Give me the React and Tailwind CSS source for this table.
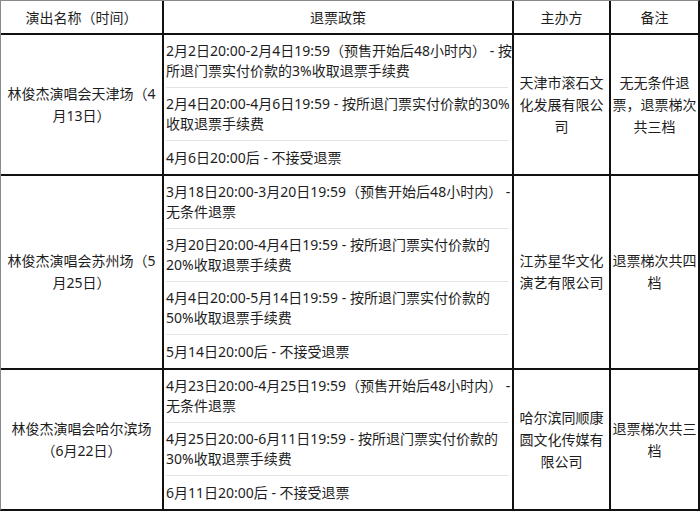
const rows = [
  {
    name: ["林俊杰演唱会天津场（4", "月13日）"],
    policies: [
      ["2月2日20:00-2月4日19:59（预售开始后48小时内） - 按", "所退门票实付价款的3%收取退票手续费"],
      ["2月4日20:00-4月6日19:59 - 按所退门票实付价款的30%", "收取退票手续费"],
      ["4月6日20:00后 - 不接受退票"],
    ],
    host: ["天津市滚石文", "化发展有限公", "司"],
    note: ["无无条件退", "票，退票梯次", "共三档"],
  },
  {
    name: ["林俊杰演唱会苏州场（5", "月25日）"],
    policies: [
      ["3月18日20:00-3月20日19:59（预售开始后48小时内） -", "无条件退票"],
      ["3月20日20:00-4月4日19:59 - 按所退门票实付价款的", "20%收取退票手续费"],
      ["4月4日20:00-5月14日19:59 - 按所退门票实付价款的", "50%收取退票手续费"],
      ["5月14日20:00后 - 不接受退票"],
    ],
    host: ["江苏星华文化", "演艺有限公司"],
    note: ["退票梯次共四", "档"],
  },
  {
    name: ["林俊杰演唱会哈尔滨场", "（6月22日）"],
    policies: [
      ["4月23日20:00-4月25日19:59（预售开始后48小时内） -", "无条件退票"],
      ["4月25日20:00-6月11日19:59 - 按所退门票实付价款的", "30%收取退票手续费"],
      ["6月11日20:00后 - 不接受退票"],
    ],
    host: ["哈尔滨同顺康", "圆文化传媒有", "限公司"],
    note: ["退票梯次共三", "档"],
  },
];

const Lines = ({ lines }) => (
  <div className="text-center leading-[22px]">
    {lines.map((l, i) => (
      <div key={i} className="whitespace-nowrap">
        {l}
      </div>
    ))}
  </div>
);

const Center = ({ children }) => (
  <div className="bg-white flex items-center justify-center">{children}</div>
);

const App = () => {
  return (
    <div className="w-[700px] h-[513px] bg-white font-['Noto_Sans','Noto_Sans_CJK_SC',sans-serif] text-[14px] text-[#1e1e1e]">
      <div className="grid grid-cols-[161px_348px_95px_87px] gap-[2px] bg-[#111] border-t border-l border-[#8a8a8a] border-r-2 border-r-[#111] border-b-2 border-b-[#111]">
        <div className="bg-white h-[32px] flex items-center justify-center">演出名称（时间）</div>
        <div className="bg-white h-[32px] flex items-center justify-center">退票政策</div>
        <div className="bg-white h-[32px] flex items-center justify-center">主办方</div>
        <div className="bg-white h-[32px] flex items-center justify-center">备注</div>

        {rows.map((row, r) => (
          <div key={r} className="contents">
            <Center>
              <Lines lines={row.name} />
            </Center>
            <div className="bg-white pl-[2px] pr-[4px] flex flex-col">
              {row.policies.map((p, i) => {
                const last = i === row.policies.length - 1;
                return (
                  <div
                    key={i}
                    className={
                      last
                        ? "leading-[20px] pt-[7px] pb-[6px] flex-1"
                        : "leading-[20px] pt-[6px] pb-[6px] border-b border-[#e4e4e4]"
                    }
                  >
                    {p.map((l, j) => (
                      <div key={j} className="whitespace-nowrap">
                        {l}
                      </div>
                    ))}
                  </div>
                );
              })}
            </div>
            <Center>
              <Lines lines={row.host} />
            </Center>
            <Center>
              <Lines lines={row.note} />
            </Center>
          </div>
        ))}
      </div>
    </div>
  );
};

export default App;
